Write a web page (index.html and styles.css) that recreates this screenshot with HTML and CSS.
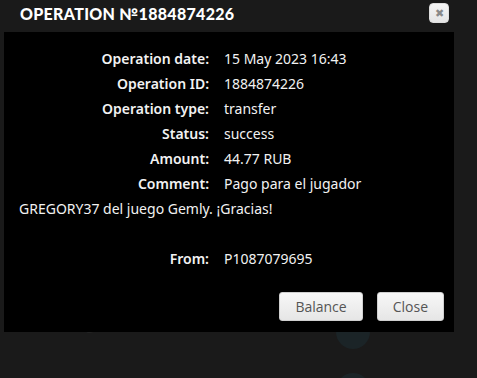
FILE: index.html
```
<!DOCTYPE html>
<html lang="en">
<head>
  <meta charset="UTF-8">
  <meta name="viewport" content="width=device-width, initial-scale=1.0">
  <title>Operation №1884874226</title>
  <link rel="stylesheet" href="styles.css">
</head>
<body>
  <div class="fondo">
    <div class="fondo-fila">
      <span class="fondo-texto">Wall Page</span>
      <span class="fondo-circulo"></span>
    </div>
    <div class="fondo-fila">
      <span class="fondo-texto"></span>
      <span class="fondo-circulo"></span>
    </div>
  </div>

  <div class="modal">
    <div class="modal-cabecera">
      <h1>OPERATION №1884874226</h1>
      <button class="cerrar" type="button">&#10006;</button>
    </div>
    <div class="modal-cuerpo">
      <p class="detalle">
        <span class="etiqueta">Operation date:</span>15 May 2023 16:43<br>
        <span class="etiqueta">Operation ID:</span>1884874226<br>
        <span class="etiqueta">Operation type:</span>transfer<br>
        <span class="etiqueta">Status:</span>success<br>
        <span class="etiqueta">Amount:</span>44.77 RUB<br>
        <span class="etiqueta">Comment:</span>Pago para el jugador GREGORY37 del juego Gemly. ¡Gracias!<br>
        <br>
        <span class="etiqueta">From:</span>P1087079695
      </p>
      <div class="acciones">
        <button class="btn" type="button">Balance</button>
        <button class="btn" type="button">Close</button>
      </div>
    </div>
  </div>
</body>
</html>
```
FILE: styles.css
```
html, body {
  margin: 0;
  height: 100%;
}
body {
  background: #1a1a1a;
  font-family: 'Noto Sans', 'Open Sans', sans-serif;
  position: relative;
  overflow: hidden;
}
.fondo {
  height: 100%;
  box-sizing: border-box;
  overflow: hidden;
  padding: 315px 0 0 35px;
  display: flex;
  flex-direction: column;
  gap: 24px;
}
.fondo-fila {
  display: flex;
  flex-shrink: 0;
  align-items: flex-start;
  width: 335px;
  justify-content: space-between;
  height: 34px;
}
.fondo-texto {
  color: #232323;
  font-weight: bold;
  font-size: 14px;
  line-height: 20px;
}
.fondo-circulo {
  width: 34px;
  height: 34px;
  border-radius: 50%;
  background: #1b2427;
}
.modal {
  position: absolute;
  top: 0;
  left: 4px;
  width: 450px;
}
.modal-cabecera {
  height: 32px;
  display: flex;
  justify-content: space-between;
  align-items: flex-start;
  padding: 0 5px 0 16px;
  background: #1a1a1a;
}
.modal-cabecera h1 {
  margin: 0;
  color: #fff;
  font-family: 'Lato', sans-serif;
  font-weight: 900;
  font-size: 16px;
  letter-spacing: 0.3px;
  line-height: 28px;
}
.cerrar {
  margin-top: 3px;
  width: 20px;
  height: 20px;
  padding: 0;
  border: 1px solid #ddd;
  border-radius: 4px;
  background: linear-gradient(#f6f6f6, #e4e4e4);
  color: #8a8a8a;
  font-size: 11px;
  line-height: 18px;
  text-align: center;
}
.modal-cuerpo {
  background: #000;
  padding: 14px 10px 11px 15px;
}
.detalle {
  margin: 0;
  color: #f2f2f2;
  font-size: 14px;
  line-height: 25px;
  padding-right: 5px;
}
.etiqueta {
  display: inline-block;
  width: 190px;
  margin-right: 15px;
  text-align: right;
  font-weight: 600;
}
.acciones {
  display: flex;
  justify-content: flex-end;
  gap: 14px;
  margin-top: 21px;
}
.btn {
  height: 29px;
  padding: 0 15px;
  border: 1px solid #cfcfcf;
  border-radius: 3px;
  background: linear-gradient(#f7f7f7, #e6e6e6);
  color: #555;
  font-family: 'Open Sans', sans-serif;
  font-size: 14px;
}
.btn:hover {
  background: #e6e6e6;
}
```
